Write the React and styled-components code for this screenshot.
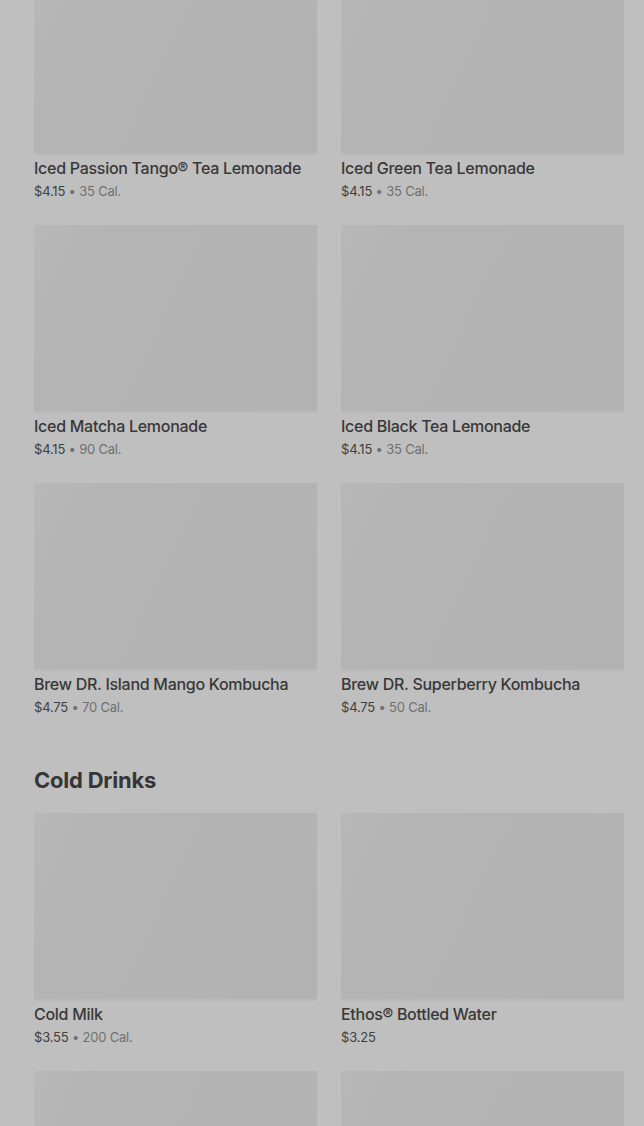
import React from 'react'
import styled, { createGlobalStyle } from 'styled-components'

const GlobalStyle = createGlobalStyle`
  html, body {
    margin: 0;
    padding: 0;
    background: #bfbfbf;
    overflow: hidden;
  }
  body {
    font-family: "Inter", "Liberation Sans", sans-serif;
    color: #3a3a3a;
  }
`

const sections = [
  {
    items: [
      { name: 'Iced Passion Tango® Tea Lemonade', price: '$4.15', cal: '35 Cal.' },
      { name: 'Iced Green Tea Lemonade', price: '$4.15', cal: '35 Cal.' },
      { name: 'Iced Matcha Lemonade', price: '$4.15', cal: '90 Cal.' },
      { name: 'Iced Black Tea Lemonade', price: '$4.15', cal: '35 Cal.' },
      { name: 'Brew DR. Island Mango Kombucha', price: '$4.75', cal: '70 Cal.' },
      { name: 'Brew DR. Superberry Kombucha', price: '$4.75', cal: '50 Cal.' },
    ],
  },
  {
    title: 'Cold Drinks',
    items: [
      { name: 'Cold Milk', price: '$3.55', cal: '200 Cal.' },
      { name: 'Ethos® Bottled Water', price: '$3.25' },
      { name: 'Milk', price: '$2.95' },
      { name: 'Water', price: '$0.00' },
    ],
  },
]

function Product({ name, price, cal }) {
  return (
    <Card>
      <Thumb />
      <Name>{name}</Name>
      <Meta>
        <Price>{price}</Price>
        {cal && <Cal> • {cal}</Cal>}
      </Meta>
    </Card>
  )
}

export default function App() {
  return (
    <Page>
      <GlobalStyle />
      {sections.map((s, i) => (
        <Section key={i}>
          {s.title && <Heading>{s.title}</Heading>}
          <Grid>
            {s.items.map((it) => (
              <Product key={it.name} {...it} />
            ))}
          </Grid>
        </Section>
      ))}
    </Page>
  )
}

const Page = styled.div`
  padding: 0 20px 0 34px;
  margin-top: -33px;
  display: flex;
  flex-direction: column;
  gap: 50px;
`

const Section = styled.section`
  display: flex;
  flex-direction: column;
`

const Heading = styled.h2`
  margin: 0 0 19px;
  font-size: 22px;
  line-height: 28px;
  font-weight: 700;
  letter-spacing: -0.01em;
  color: #363636;
`

const Grid = styled.div`
  display: grid;
  grid-template-columns: 283px 283px;
  column-gap: 24px;
  row-gap: 25px;
`

const Card = styled.div`
  display: flex;
  flex-direction: column;
`

const Thumb = styled.div`
  height: 188px;
  background: linear-gradient(115deg, #b8b8b8 0%, #b4b4b4 20%, #b2b2b2 100%);
  border-bottom: 2px solid #b9b9b9;
  box-sizing: border-box;
`

const Name = styled.div`
  margin-top: 3px;
  font-size: 16px;
  line-height: 20px;
  font-weight: 500;
  letter-spacing: -0.28px;
  color: #383838;
`

const Meta = styled.div`
  margin-top: 4px;
  font-size: 13px;
  line-height: 18px;
  letter-spacing: -0.2px;
`

const Price = styled.span`
  color: #404040;
`

const Cal = styled.span`
  color: #707070;
`
